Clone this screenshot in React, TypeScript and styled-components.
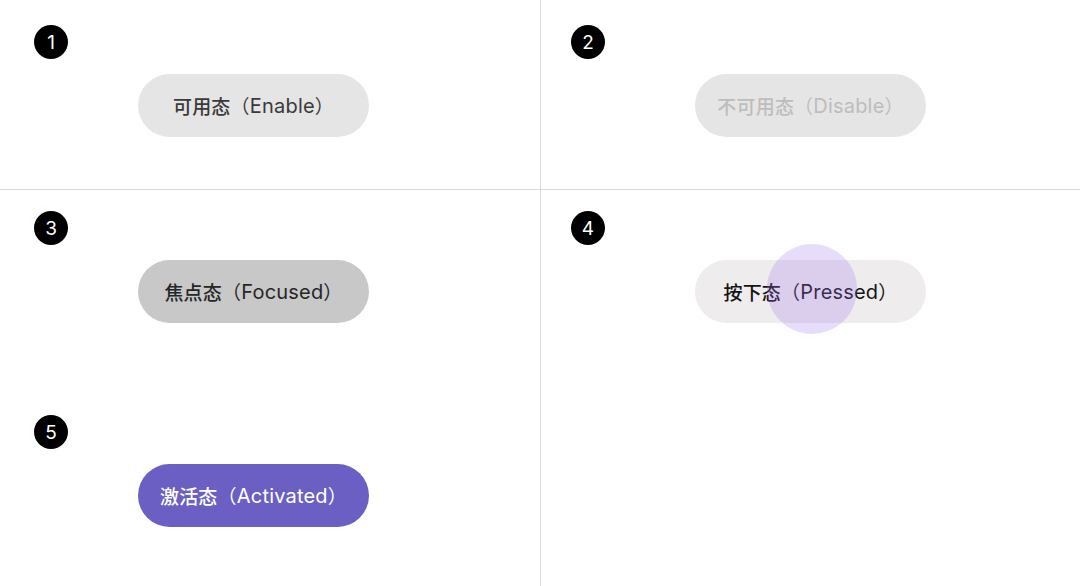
import React from "react";
import styled, { createGlobalStyle } from "styled-components";

const GlobalStyle = createGlobalStyle`
  html, body {
    margin: 0;
    padding: 0;
    background: #ffffff;
  }
  body {
    font-family: Inter, "Noto Sans CJK SC", sans-serif;
  }
`;

type Variant = "enable" | "disable" | "focused" | "pressed" | "activated";

const BUTTON_COLORS: Record<Variant, { bg: string; fg: string }> = {
  enable: { bg: "#e5e5e5", fg: "#3a3a3a" },
  disable: { bg: "#e5e5e5", fg: "#bdbdbd" },
  focused: { bg: "#c8c8c8", fg: "#262626" },
  pressed: { bg: "#eeecec", fg: "#141414" },
  activated: { bg: "#6b5fc4", fg: "#ffffff" },
};

const Board = styled.div`
  width: 1080px;
  height: 586px;
  display: grid;
  grid-template-columns: 540px 540px;
  grid-template-rows: 189px 1fr;
  overflow: hidden;
`;

const Cell = styled.div<{ $right?: boolean; $bottom?: boolean }>`
  display: flex;
  flex-direction: column;
  gap: 92px;
  padding: ${(p) => (p.$bottom ? "21px" : "25px")} 0 0
    ${(p) => (p.$right ? "30px" : "34px")};
  border-left: ${(p) => (p.$right ? "1px solid #d9d9d9" : "none")};
  border-top: ${(p) => (p.$bottom ? "1px solid #d9d9d9" : "none")};
  box-sizing: border-box;
`;

const Item = styled.div`
  display: flex;
  flex-direction: column;
  gap: 15px;
`;

const Badge = styled.div`
  width: 34px;
  height: 34px;
  border-radius: 50%;
  background: #000;
  color: #fff;
  display: flex;
  align-items: center;
  justify-content: center;
  font-family: Inter, sans-serif;
  font-size: 19px;
  font-weight: 400;
`;

const StateButton = styled.div<{ $variant: Variant; $indent: number }>`
  position: relative;
  margin-left: ${(p) => p.$indent}px;
  width: 231px;
  height: 63px;
  border-radius: 32px;
  background: ${(p) => BUTTON_COLORS[p.$variant].bg};
  color: ${(p) => BUTTON_COLORS[p.$variant].fg};
  display: flex;
  align-items: center;
  justify-content: center;
  font-size: 20px;
  letter-spacing: 0.2px;
`;

const Cn = styled.span`
  font-family: "Noto Sans CJK SC", sans-serif;
  font-weight: 500;
  font-size: 19px;
`;

const Paren = styled.span`
  font-family: "Noto Sans CJK SC", sans-serif;
  font-size: 19px;
`;

const Ripple = styled.div`
  position: absolute;
  left: 72px;
  top: -16px;
  width: 90px;
  height: 90px;
  border-radius: 50%;
  background: rgba(163, 115, 239, 0.25);
  pointer-events: none;
`;

interface StateProps {
  index: number;
  variant: Variant;
  cn: string;
  en: string;
  indent?: number;
}

const StateItem: React.FunctionComponent<StateProps> = ({
  index,
  variant,
  cn,
  en,
  indent = 104,
}) => (
  <Item>
    <Badge>{index}</Badge>
    <StateButton $variant={variant} $indent={indent}>
      <Cn>{cn}</Cn>
      <Paren>（</Paren>
      {en}
      <Paren>）</Paren>
      {variant === "pressed" && <Ripple />}
    </StateButton>
  </Item>
);

const App: React.FunctionComponent = () => (
  <>
    <GlobalStyle />
    <Board>
      <Cell>
        <StateItem index={1} variant="enable" cn="可用态" en="Enable" />
      </Cell>
      <Cell $right>
        <StateItem
          index={2}
          variant="disable"
          cn="不可用态"
          en="Disable"
          indent={124}
        />
      </Cell>
      <Cell $bottom>
        <StateItem index={3} variant="focused" cn="焦点态" en="Focused" />
        <StateItem index={5} variant="activated" cn="激活态" en="Activated" />
      </Cell>
      <Cell $right $bottom>
        <StateItem
          index={4}
          variant="pressed"
          cn="按下态"
          en="Pressed"
          indent={124}
        />
      </Cell>
    </Board>
  </>
);

export default App;
